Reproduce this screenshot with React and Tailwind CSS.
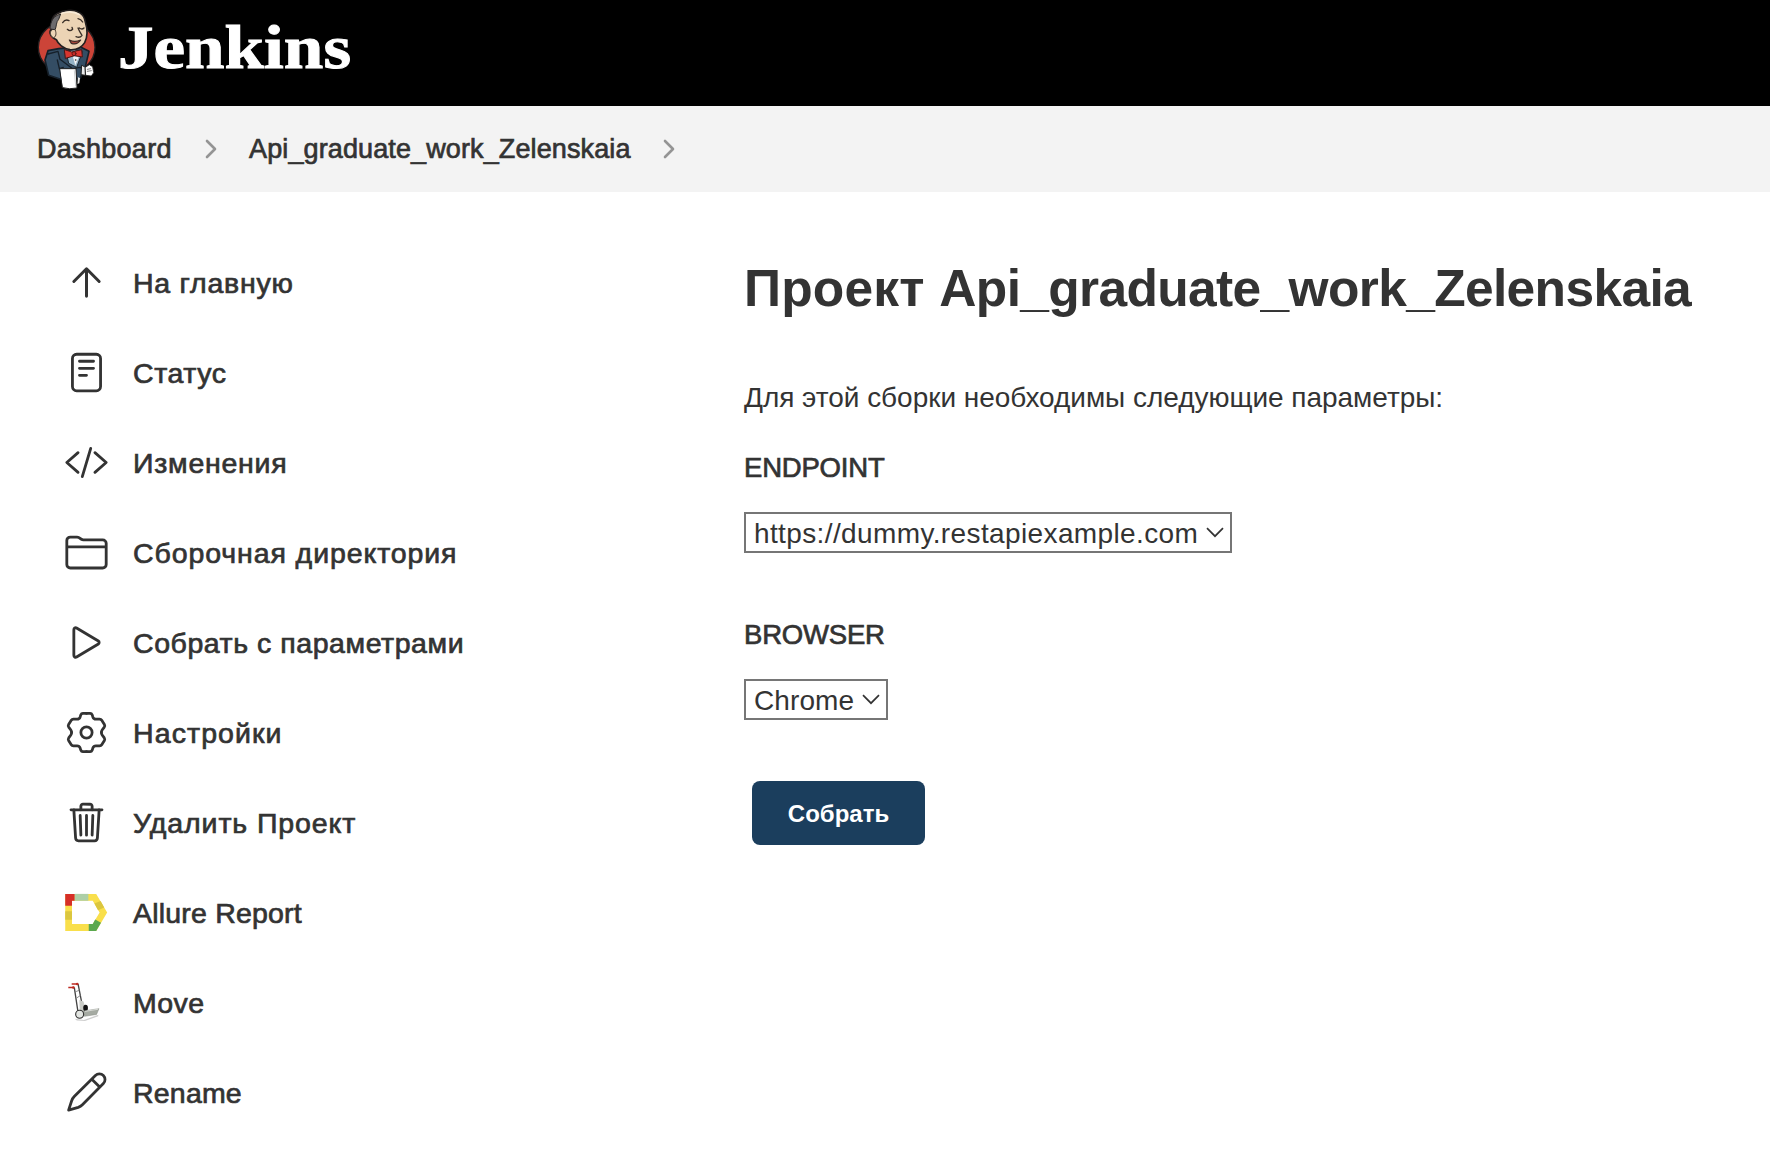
import React from "react";
import {
  IoReaderOutline,
  IoCodeSlashOutline,
  IoFolderOutline,
  IoPlayOutline,
  IoTrashOutline,
} from "react-icons/io5";

const iconClass = "mb-px h-[45px] w-[45px] shrink-0";

function ArrowUp() {
  return (
    <svg viewBox="0 0 512 512" className={iconClass} fill="none" stroke="currentColor" strokeWidth="34" strokeLinecap="round" strokeLinejoin="round">
      <path d="M112 244l144-144 144 144M256 120v292" />
    </svg>
  );
}

const gearQuarter =
  "M0-18.7H-3.6Q-5-18.7-5.5-17.4L-6.2-15.2Q-7-13-9.2-13H-12.8Q-14.2-13-14.9-11.9L-17.5-7.8Q-18.2-6.5-17.4-5.3L-15.3-2.4Q-14.6-1.4-14.6 0";

function Gear() {
  return (
    <svg viewBox="-22 -22 44 44" className={iconClass} fill="none" stroke="currentColor" strokeWidth="2.7" strokeLinecap="round" strokeLinejoin="round">
      <path d={gearQuarter} />
      <path d={gearQuarter} transform="scale(-1 1)" />
      <path d={gearQuarter} transform="scale(1 -1)" />
      <path d={gearQuarter} transform="scale(-1 -1)" />
      <circle r="5.5" />
    </svg>
  );
}

function Allure() {
  return (
    <svg viewBox="4.5 5.5 44 44" className={iconClass}>
      <path d="M5.7 9.3H36L46.7 27.5 36 45.7H5.7zM12.3 16V38.7H32.6L39.3 27.5 32.6 16z" fill="#f9df4b" fillRule="evenodd" />
      <path d="M5.7 9.3H15V16H12.3V21H5.7z" fill="#d62f28" />
      <path d="M15 9.3H28.3V16H15z" fill="#adcfa6" />
      <path d="M5.7 26.3H12.3V34.7H5.7zM34.2 18.8L40.3 16.2 43.8 22.6 37.8 25.2z" fill="#dbc63f" />
      <path d="M28.7 38.7H32.6L35 34.3 40.7 37.6 36 45.7H28.7z" fill="#5ba84f" />
    </svg>
  );
}

function HandTruck() {
  return (
    <svg viewBox="4.5 95.5 44 44" className={iconClass} fill="none">
      <path d="M15 133.5L24 134.5 38 129.5 38 131 25 135.5 17 135z" fill="#cfcfcf" />
      <path d="M18.3 99.5L21.7 117M14.6 103L18.2 127" stroke="#444" strokeWidth="1.3" />
      <path d="M15.6 107L19.7 105.5M17 113L20.8 110.5" stroke="#777" strokeWidth=".8" />
      <path d="M19.5 115L23.5 116.5 27 127 20 128z" fill="#c9cbc6" />
      <ellipse cx="25.6" cy="122.8" rx="2.3" ry="3.2" fill="#111" />
      <path d="M22.5 126L38.7 123.5 36.3 129.2 24.5 131z" fill="#a5aaa2" stroke="#858a83" strokeWidth=".5" />
      <path d="M25 126.2L37.8 124.1" stroke="#dadcd8" strokeWidth=".9" />
      <circle cx="19.8" cy="129" r="3.9" fill="#e3e6e2" stroke="#333" strokeWidth="1.1" />
      <path d="M12 99.4H18.5M8.7 102.8H14.7" stroke="#bd2b22" strokeWidth="1.3" />
      <circle cx="17.4" cy="99.4" r="1.2" fill="#bd2b22" />
      <circle cx="13.6" cy="102.8" r="1.2" fill="#bd2b22" />
    </svg>
  );
}

function Pencil() {
  return (
    <svg viewBox="4.5 4.5 44 44" className={iconClass} fill="none" stroke="currentColor" strokeWidth="2.7" strokeLinecap="round" strokeLinejoin="round">
      <path d="M9 43.7L12 34.6Q12.8 32.2 14.5 30.5L35.2 9.9A5.5 5.5 0 0 1 43 17.7L22.5 38.5Q20.8 40.2 18.4 41zM31.7 13.5L39.4 21.2" />
    </svg>
  );
}

function Butler() {
  return (
    <svg viewBox="0 0 240 300" className="h-[100px] w-20 shrink-0" strokeLinejoin="round" strokeLinecap="round">
      <ellipse cx="110" cy="142" rx="85" ry="78" fill="#cc4438" stroke="#231f20" strokeWidth="4" />
      <path d="M86 146L54 152 45 180 56 226 92 238 150 236 166 200 177 154 150 140z" fill="#344d64" stroke="#16202a" strokeWidth="5" />
      <path d="M66 60C70 44 90 34 112 32 142 28 163 42 166 66 173 88 172 112 164 128 154 144 136 150 120 149 100 146 84 132 79 119L70 114C58 106 57 92 66 88z" fill="#ecd4b5" stroke="#231f20" strokeWidth="5" />
      <path d="M60 86C62 62 70 48 92 42L86 58C78 66 80 78 76 88z" fill="#6d6b6d" stroke="#2b292a" strokeWidth="3" />
      <path d="M96 40C112 34 132 34 148 44" fill="none" stroke="#f8ead6" strokeWidth="5" />
      <path d="M66 90C58 94 60 108 70 113 78 112 80 100 76 91" fill="#ecd4b5" stroke="#4a3b30" strokeWidth="3" />
      <path d="M98 68Q106 56 117 62M144 56Q153 58 158 66M112 88Q120 96 128 88L126 82M148 84Q156 90 162 84M144 84Q148 94 156 106 150 115 138 110" fill="none" stroke="#3b3029" strokeWidth="4" />
      <path d="M118 120Q134 128 152 120 142 136 124 130z" fill="#a9483c" stroke="#3b2a24" strokeWidth="3.5" />
      <path d="M108 154L116 190 140 202 158 154 134 150z" fill="#93b2c6" stroke="#1d2832" strokeWidth="3" />
      <path d="M128 168L136 196 146 172z" fill="#f2f3f4" />
      <path d="M104 149L125 156 155 149 157 171 134 167 107 175z" fill="#d8352f" stroke="#4c1513" strokeWidth="3" />
      <circle cx="132" cy="161" r="6" fill="#c72c28" stroke="#4c1513" strokeWidth="2.5" />
      <circle cx="137" cy="180" r="2.5" fill="#222" />
      <path d="M82 180L88 206 100 202M54 162L84 154 90 178 128 206 150 202 162 206" fill="none" stroke="#16202a" strokeWidth="4" />
      <path d="M156 196L166 202 166 226 154 224z" fill="#e9eaea" stroke="#222" strokeWidth="3" />
      <path d="M166 202L178 194 188 200 191 218 184 228 168 226z" fill="#fff" stroke="#222" strokeWidth="2.5" />
      <path d="M172 208L182 206M172 214L184 212" stroke="#666" strokeWidth="2.5" />
      <path d="M144 232L150 234 148 250 142 252z" fill="#e9eaea" />
      <path d="M90 206L138 206 141 264Q118 269 98 263z" fill="#fff" stroke="#1f1f1f" strokeWidth="3" />
      <path d="M133 212L137 258" stroke="#cfd2d4" strokeWidth="3" />
    </svg>
  );
}

const MEDIUM = "[-webkit-text-stroke:0.7px_#333]";

const items = [
  { label: "На главную", Icon: ArrowUp, track: "tracking-[0.75px]" },
  { label: "Статус", Icon: IoReaderOutline, track: "tracking-[0.6px]" },
  { label: "Изменения", Icon: IoCodeSlashOutline, track: "tracking-[0.75px]" },
  { label: "Сборочная директория", Icon: IoFolderOutline, track: "tracking-[0.9px]" },
  { label: "Собрать с параметрами", Icon: IoPlayOutline, track: "tracking-[0.55px]" },
  { label: "Настройки", Icon: Gear, track: "tracking-[1.1px]" },
  { label: "Удалить Проект", Icon: IoTrashOutline, track: "tracking-[0.9px]" },
  { label: "Allure Report", Icon: Allure, track: "tracking-[0.2px]" },
  { label: "Move", Icon: HandTruck, track: "tracking-[0.5px]" },
  { label: "Rename", Icon: Pencil, track: "tracking-[0.2px]" },
];

function Crumb() {
  return (
    <svg viewBox="0 0 12 20" className="h-5 w-3 shrink-0" fill="none" stroke="#949494" strokeWidth="2.6" strokeLinecap="round" strokeLinejoin="round">
      <path d="M2 2l8 8-8 8" />
    </svg>
  );
}

function Dropdown({ children, width, track }) {
  return (
    <div className={`mt-[25px] flex h-[41px] items-center justify-between border-2 border-[#767676] pr-[6px] pl-2 ${width}`}>
      <span className={`pt-[3px] text-[28px] leading-none ${track}`}>{children}</span>
      <svg viewBox="0 0 18 12" className="h-3 w-[18px] shrink-0" fill="none" stroke="#333" strokeWidth="1.7">
        <path d="M1 1.2l8 8 8-8" />
      </svg>
    </div>
  );
}

export default function App() {
  return (
    <div className="flex h-[1158px] w-[1770px] flex-col overflow-hidden bg-white font-['Liberation_Sans',Arial,sans-serif] whitespace-nowrap text-[#333]">
      <header className="flex h-[106px] shrink-0 items-start bg-black pl-[30px]">
        <Butler />
        <span className="ml-[8px] inline-block origin-left scale-x-[1.165] pt-[13px] font-['Liberation_Serif',serif] text-[61px] leading-[70px] font-bold text-white [-webkit-text-stroke:1px_#fff]">
          Jenkins
        </span>
      </header>

      <nav className={`flex h-[86px] shrink-0 items-center bg-[#f3f3f3] pl-[37px] text-[27px] ${MEDIUM}`}>
        <span className="w-[168px] tracking-[0.3px]">Dashboard</span>
        <Crumb />
        <span className="ml-[32px] w-[414px] tracking-[0.12px]">Api_graduate_work_Zelenskaia</span>
        <Crumb />
      </nav>

      <div className="flex flex-1">
        <aside className="w-[744px] shrink-0 pt-[46px] pl-[64px]">
          {items.map(({ label, Icon, track }) => (
            <a key={label} className="flex h-[90px] items-center gap-6">
              <Icon className={iconClass} />
              <span className={`pt-px text-[28.5px] ${MEDIUM} ${track}`}>{label}</span>
            </a>
          ))}
        </aside>

        <main className="flex flex-col items-start pt-[49px]">
          <h1 className="flex h-24 items-center text-[51.5px] font-bold whitespace-pre">
            <span className="tracking-[0.2px]">Проект </span>
            <span className="tracking-[-0.65px]">Api_graduate_work_Zelenskaia</span>
          </h1>
          <p className="mt-[41px] text-[28px] leading-10 tracking-[-0.03px]">
            Для этой сборки необходимы следующие параметры:
          </p>
          <div className={`mt-[30px] text-[27.5px] leading-10 tracking-[-0.2px] ${MEDIUM}`}>ENDPOINT</div>
          <div className="-mt-px">
            <Dropdown width="w-[488px]" track="tracking-[0.38px]">https://dummy.restapiexample.com</Dropdown>
          </div>
          <div className={`mt-[62px] text-[27.5px] leading-10 tracking-[-0.2px] ${MEDIUM}`}>BROWSER</div>
          <div className="-mt-px">
            <Dropdown width="w-[144px]" track="tracking-[0.1px]">Chrome</Dropdown>
          </div>
          <button className="mt-[61px] ml-2 h-16 w-[173px] rounded-lg bg-[#1b3e5d] pt-[2px] text-2xl font-bold text-white">
            Собрать
          </button>
        </main>
      </div>
    </div>
  );
}
